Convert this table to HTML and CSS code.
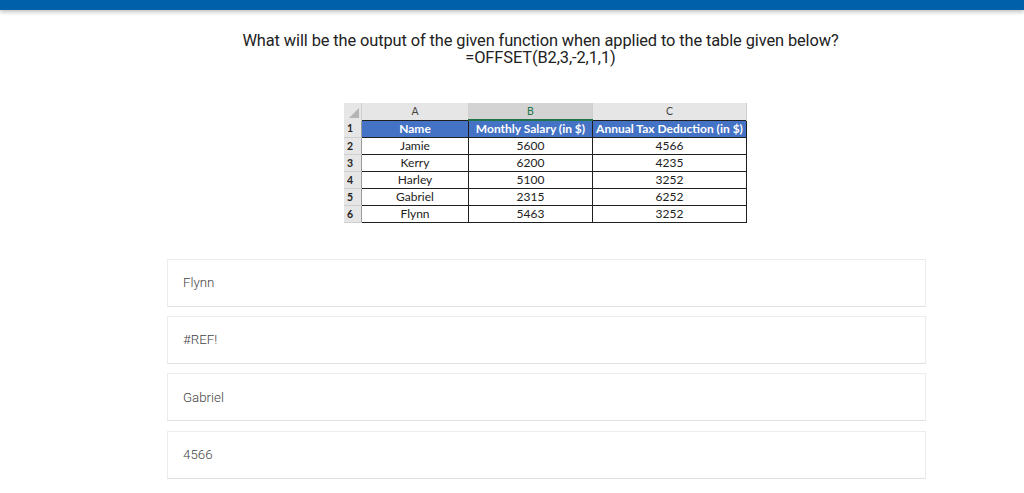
FILE: index.html
```html
<!DOCTYPE html>
<html>
<head>
<meta charset="utf-8">
<link rel="stylesheet" href="styles.css">
</head>
<body>
<div class="topbar"></div>
<main class="content">
  <div class="question">
    <p class="q-text">What will be the output of the given function when applied to the table given below?<br>=OFFSET(B2,3,-2,1,1)</p>
    <div class="sheet-wrap">
      <table class="sheet">
        <tr class="letters">
          <td class="corner"><span class="tri"></span></td>
          <td class="colA">A</td>
          <td class="colB sel">B</td>
          <td class="colC">C</td>
        </tr>
        <tr class="hdr">
          <td class="rn">1</td>
          <td class="h">Name</td>
          <td class="h">Monthly Salary (in $)</td>
          <td class="h">Annual Tax Deduction (in $)</td>
        </tr>
        <tr><td class="rn">2</td><td class="d">Jamie</td><td class="d">5600</td><td class="d">4566</td></tr>
        <tr><td class="rn">3</td><td class="d">Kerry</td><td class="d">6200</td><td class="d">4235</td></tr>
        <tr><td class="rn">4</td><td class="d">Harley</td><td class="d">5100</td><td class="d">3252</td></tr>
        <tr><td class="rn">5</td><td class="d">Gabriel</td><td class="d">2315</td><td class="d">6252</td></tr>
        <tr class="last"><td class="rn">6</td><td class="d">Flynn</td><td class="d">5463</td><td class="d">3252</td></tr>
      </table>
    </div>
  </div>
  <div class="options">
    <div class="option">Flynn</div>
    <div class="option">#REF!</div>
    <div class="option">Gabriel</div>
    <div class="option">4566</div>
  </div>
</main>
</body>
</html>
```

FILE: styles.css
```css
html, body {
  margin: 0;
  padding: 0;
  background: #ffffff;
}
body {
  font-family: Roboto, "Liberation Sans", sans-serif;
  color: #222;
}
.topbar {
  height: 10px;
  background: #0060aa;
  box-shadow: 0 2px 4px rgba(0, 0, 0, 0.25);
}
.content {
  width: 759px;
  margin-left: 167px;
}
.question {
  display: flex;
  flex-direction: column;
  align-items: center;
}
.q-text {
  margin: 22px 0 0 0;
  padding-right: 12px;
  font-size: 16.4px;
  line-height: 17px;
  text-align: center;
  color: #222;
  letter-spacing: -0.1px;
}
.sheet-wrap {
  margin-top: 37px;
  padding-right: 2px;
}
.sheet {
  border-collapse: collapse;
  font-family: Lato, "Open Sans", sans-serif;
  font-size: 12px;
  color: #222;
}
.sheet td {
  padding: 0;
  text-align: center;
  white-space: nowrap;
}
.letters td {
  height: 15px;
  background: #e6e6e6;
  color: #444;
  font-size: 10.5px;
  border-right: 1px solid #cfcfcf;
}
.letters td.sel {
  background: #d3d3d3;
  border-bottom: 2px solid #217346;
  color: #217346;
}
.corner {
  width: 17px;
  position: relative;
}
.tri {
  position: absolute;
  right: 2px;
  bottom: 2px;
  width: 0;
  height: 0;
  border-left: 10px solid transparent;
  border-bottom: 10px solid #b5b5b5;
}
.colA { width: 106px; }
.colB { width: 123px; }
.colC { width: 153px; }
.sheet tr { height: 17px; }
.rn {
  background: #e6e6e6;
  color: #222;
  font-size: 10.5px;
  font-weight: bold;
  text-align: left !important;
  padding-left: 3px !important;
  border-bottom: 1px solid #cfcfcf;
  border-right: 1px solid #9a9a9a;
}
.h {
  background: #4472c4;
  color: #ffffff;
  font-weight: bold;
  border: 1px solid #1f1f1f;
}
.d {
  border: 1px solid #1f1f1f;
  background: #ffffff;
}
.options {
  margin-top: 36px;
  display: flex;
  flex-direction: column;
  gap: 9.4px;
}
.option {
  height: 48px;
  box-sizing: border-box;
  border: 1px solid #ececec;
  border-bottom-color: #e0e0e0;
  display: flex;
  align-items: center;
  padding-left: 15px;
  font-size: 13.3px;
  font-weight: 300;
  color: #444;
}
```
